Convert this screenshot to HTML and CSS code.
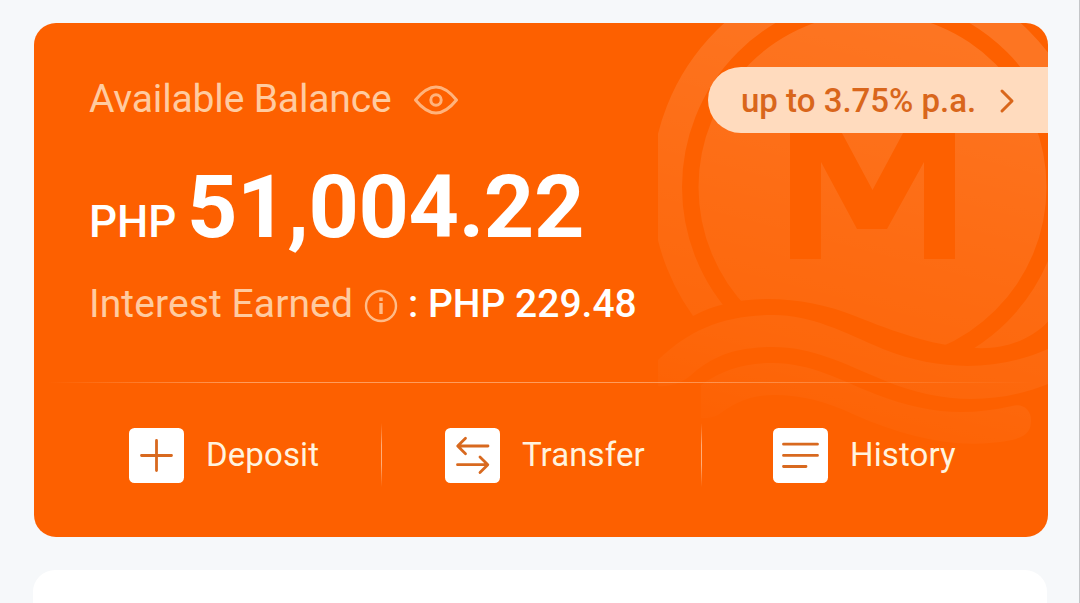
FILE: index.html
```
<!DOCTYPE html>
<html lang="en">
<head>
<meta charset="utf-8">
<title>Account balance</title>
<link rel="stylesheet" href="styles.css">
</head>
<body>
<main class="screen">
  <section class="card">
    <svg class="watermark" viewBox="658 23 390 430" aria-hidden="true">
      <defs>
        <linearGradient id="fade" gradientUnits="userSpaceOnUse" x1="910" y1="23" x2="800" y2="450">
          <stop offset="0" stop-color="#fff" stop-opacity=".135"/>
          <stop offset=".5" stop-color="#fff" stop-opacity=".075"/>
          <stop offset=".78" stop-color="#fff" stop-opacity=".045"/>
          <stop offset="1" stop-color="#fff" stop-opacity=".008"/>
        </linearGradient>
        <clipPath id="sky"><path d="M658 23H1048V322C1024 345 996 351 964 347C932 345 895 332 855 316C805 296 740 291 693 316L658 330Z"/></clipPath>
      </defs>
      <g clip-path="url(#sky)">
        <circle cx="872.5" cy="187" r="205.75" fill="none" stroke="url(#fade)" stroke-width="30.5"/>
        <path fill="url(#fade)" fill-rule="evenodd" d="M872.5 13a174 174 0 1 0 0 348a174 174 0 1 0 0-348ZM790 120V259H821V162L857 229H887L924 162V259H955V120H910L872.500 190L835 120Z"/>
      </g>
      <path fill="url(#fade)" d="M658 360C690 329 725 315 773 315C812 315 843 332 883 349C940 372 999 371 1048 349V384C995 405 940 404 883 380C843 363 812 347 773 347C735 347 712 356 690 376C680 384 668 387 658 386Z"/>
      <path fill="url(#fade)" d="M701 385C724 369 745 363 773 363C810 363 840 380 875 394C925 413 963 417 1012 406C1024 403 1031 411 1031 420C1031 430 1028 436 1012 440C960 450 910 439 855 415C825 401 802 395 774 395C748 395 733 404 718 415Q708 419 701 418Z"/>
    </svg>

    <div class="summary">
      <div class="label-row">
        <span class="label">Available Balance</span>
        <svg class="eye" viewBox="0 0 46 32"><path d="M2.500 16C9 8 15 3 23 3S37 8 43.500 16C37 24 31 29 23 29S9 24 2.500 16Z"/><circle cx="23" cy="16" r="5.200"/></svg>
      </div>
      <div class="amount-row"><span class="currency">PHP</span><span class="amount">51,004.22</span></div>
      <div class="interest-row">
        <span class="interest-label">Interest Earned</span>
        <svg class="info" viewBox="0 0 34 34"><circle cx="17" cy="17" r="15"/><path d="M17 14V25M17 8.500V12"/></svg>
        <span class="interest-value">: PHP 229.48</span>
      </div>
    </div>

    <a class="rate"><span class="rate-text">up to 3.75% p.a.</span>
      <svg class="chevron" viewBox="0 0 16 26"><path d="M3 3L13 13L3 23"/></svg>
    </a>

    <div class="rule"></div>
    <nav class="actions">
      <a class="action deposit">
        <svg class="icon" viewBox="0 0 55 55"><rect width="55" height="55" rx="5.500"/><path d="M12.500 27.500H42.500M27.500 12.500V42.500"/></svg>
        <span class="action-text">Deposit</span>
      </a>
      <a class="action transfer">
        <svg class="icon" viewBox="0 0 55 55"><rect width="55" height="55" rx="5.500"/><path d="M43 18H13M20.500 10.300L12.700 18L20.500 25.700M12.500 36.700H42.500M35 29L42.800 36.700L35 44.400"/></svg>
        <span class="action-text">Transfer</span>
      </a>
      <a class="action history">
        <svg class="icon" viewBox="0 0 55 55"><rect width="55" height="55" rx="5.500"/><path d="M10.500 16.200H44.500M10.500 27.400H44.500M10.500 38.500H33"/></svg>
        <span class="action-text">History</span>
      </a>
    </nav>
  </section>
  <section class="next-card"></section>
</main>
</body>
</html>
```
FILE: styles.css
```
* { box-sizing: border-box; }
body { margin: 0; font-family: Roboto, "Liberation Sans", sans-serif; background: #f6f8fa; }
.screen {
  height: 603px;
  padding: 23px 31px 0 34px;
  border-right: 1px solid #c4c6c8;
  overflow: hidden;
}
.card {
  position: relative;
  display: flex;
  flex-direction: column;
  height: 514px;
  border-radius: 22px;
  overflow: hidden;
  background: #fd6000;
  color: #fff;
}
.watermark { position: absolute; top: 0; right: 0; width: 390px; height: 430px; }
.summary { position: relative; height: 359px; padding: 52px 0 0 55px; }
.label-row, .interest-row, .amount-row { display: flex; white-space: nowrap; }
.label-row { align-items: center; height: 48px; }
.label { width: 324px; font-size: 39px; letter-spacing: -.15px; color: #ffcba0; }
.eye { width: 46px; height: 32px; margin-top: 2px; fill: none; stroke: #ffb37c; stroke-width: 3; stroke-linejoin: round; }
.amount-row { align-items: baseline; height: 104px; margin-top: 32px; line-height: 104px; }
.currency { width: 98px; font-size: 44px; font-weight: 500; }
.amount { font-size: 88px; font-weight: 700; letter-spacing: -.4px; }
.interest-row { align-items: center; height: 48px; margin-top: 21px; font-size: 39px; }
.interest-label { color: #ffcba0; width: 275px; letter-spacing: .1px; }
.info { width: 34px; height: 34px; margin-top: 3px; fill: none; stroke: #ffbb88; stroke-width: 2.4; }
.info path { stroke-width: 3.4; }
.interest-value { margin-left: 10px; font-weight: 500; }
.rate {
  position: absolute;
  top: 44px;
  right: 0;
  display: flex;
  align-items: center;
  width: 340px;
  height: 66px;
  padding-left: 33px;
  border-radius: 33px 0 0 33px;
  background: #ffdbbe;
  color: #d9661b;
  font-size: 33px;
  font-weight: 500;
  white-space: nowrap;
}
.rate-text { width: 258px; }
.chevron { width: 16px; height: 26px; margin-top: 1px; fill: none; stroke: #d9661b; stroke-width: 3; stroke-linecap: round; stroke-linejoin: round; }
.rule { height: 1px; margin: 0 14px; background: linear-gradient(90deg, transparent, #ff9c5c 20%, #ff9c5c 60%, transparent); }
.actions { display: grid; grid-template-columns: 348px 320px 346px; height: 55px; margin-top: 45px; position: relative; }
.action { position: relative; display: flex; align-items: center; gap: 22px; }
.deposit { padding-left: 95px; }
.transfer { padding-left: 63px; }
.history { padding-left: 71px; }
.deposit::before, .transfer::before {
  content: "";
  position: absolute;
  right: 0;
  top: -5px;
  width: 1px;
  height: 64px;
  background: linear-gradient(transparent, #ffad78 35%, #ffad78 65%, transparent);
}
.icon { width: 55px; height: 55px; flex: none; }
.icon rect { fill: #fff; }
.icon path { fill: none; stroke: #d8691f; stroke-width: 2.8; stroke-linecap: round; stroke-linejoin: round; }
.action-text { margin-top: -2px; font-size: 33px; letter-spacing: .1px; color: #fff3df; }
.next-card { height: 60px; margin: 33px 1px 0 -1px; border-radius: 22px 22px 0 0; background: #fff; }
```
